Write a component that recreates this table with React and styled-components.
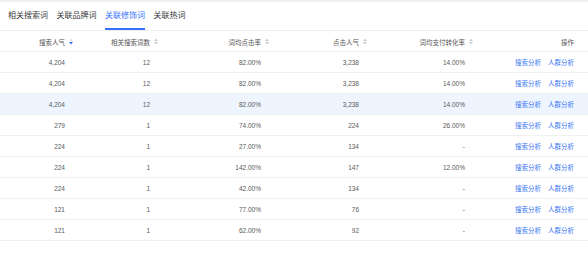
import React from "react";
import styled, { createGlobalStyle } from "styled-components";

const Global = createGlobalStyle`
  html, body { margin: 0; padding: 0; background: #fff; }
  body { font-family: "Liberation Sans", "Noto Sans CJK SC", sans-serif; }
`;

const Page = styled.div`
  width: 588px;
  height: 262px;
  overflow: hidden;
  background: #fff;
`;

const TopStrip = styled.div`
  height: 2px;
  background: #eef0f4;
`;

const TabBar = styled.div`
  display: flex;
  align-items: stretch;
  height: 28px;
  padding-left: 8px;
  border-bottom: 1px solid #eeeeee;
`;

const Tab = styled.div`
  display: flex;
  align-items: center;
  margin-right: 8.5px;
  font-size: 8px;
  line-height: 1;
  color: ${(p) => (p.$active ? "#3370ff" : "#3a3a3a")};
  box-shadow: ${(p) => (p.$active ? "inset 0 -2px 0 #3370ff" : "none")};
`;

const Grid = styled.div`
  display: grid;
  grid-template-columns: 75px 85px 111px 98px 106px 113px;
`;

const HeadCell = styled.div`
  height: 19px;
  display: flex;
  align-items: center;
  justify-content: flex-end;
  gap: 4px;
  padding-right: ${(p) => (p.$sort ? "2px" : "14px")};
  border-bottom: 1px solid #eeeeee;
  font-size: 6.5px;
  color: #555;
  margin-top: 1px;
`;

const Row = styled.div`
  display: contents;
  & > div {
    background: ${(p) => (p.$hl ? "#eef5ff" : "#fff")};
  }
`;

const Cell = styled.div`
  height: 20px;
  display: flex;
  align-items: center;
  justify-content: flex-end;
  padding-right: ${(p) => (p.$last ? "14px" : "10px")};
  border-bottom: 1px solid #f0f0f0;
  font-size: 6.5px;
  color: #595959;
  gap: 7px;
`;

const Link = styled.span`
  color: #3a76f5;
`;

function SortIcon({ active }) {
  return (
    <svg width="4" height="7" viewBox="0 0 4 7">
      <path d="M0 3 L2 0.6 L4 3 Z" fill={active ? "#e6e9ef" : "#c9ced6"} />
      <path d="M0 4 L2 6.4 L4 4 Z" fill={active ? "#3370ff" : "#c9ced6"} />
    </svg>
  );
}

const columns = [
  { title: "搜索人气", sort: true, active: true },
  { title: "相关搜索词数", sort: true },
  { title: "词均点击率", sort: true },
  { title: "点击人气", sort: true },
  { title: "词均支付转化率", sort: true },
  { title: "操作" },
];

const rows = [
  ["4,204", "12", "82.00%", "3,238", "14.00%"],
  ["4,204", "12", "82.00%", "3,238", "14.00%"],
  ["4,204", "12", "82.00%", "3,238", "14.00%"],
  ["279", "1", "74.00%", "224", "26.00%"],
  ["224", "1", "27.00%", "134", "-"],
  ["224", "1", "142.00%", "147", "12.00%"],
  ["224", "1", "42.00%", "134", "-"],
  ["121", "1", "77.00%", "76", "-"],
  ["121", "1", "62.00%", "92", "-"],
];

export default function App() {
  return (
    <Page>
      <Global />
      <TopStrip />
      <TabBar>
        <Tab>相关搜索词</Tab>
        <Tab>关联品牌词</Tab>
        <Tab $active>关联修饰词</Tab>
        <Tab>关联热词</Tab>
      </TabBar>
      <Grid>
        {columns.map((c) => (
          <HeadCell key={c.title} $sort={c.sort}>
            <span>{c.title}</span>
            {c.sort && <SortIcon active={c.active} />}
          </HeadCell>
        ))}
        {rows.map((r, i) => (
          <Row key={i} $hl={i === 2}>
            {r.map((v, j) => (
              <Cell key={j}>{v}</Cell>
            ))}
            <Cell $last>
              <Link>搜索分析</Link>
              <Link>人群分析</Link>
            </Cell>
          </Row>
        ))}
      </Grid>
    </Page>
  );
}
